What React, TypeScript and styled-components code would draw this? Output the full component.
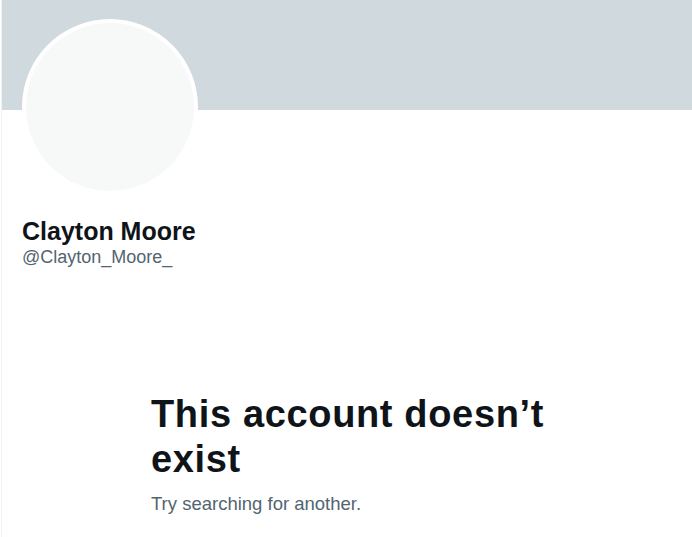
import React from 'react';
import styled, { createGlobalStyle } from 'styled-components';

const GlobalStyle = createGlobalStyle`
  body {
    margin: 0;
    background: #ffffff;
    font-family: "Liberation Sans", Arial, sans-serif;
  }
`;

const Page = styled.div`
  margin-left: 1px;
  border-left: 1px solid #eff3f4;
  min-height: 537px;
  background: #ffffff;
`;

const Banner = styled.div`
  height: 110px;
  background: #cfd9de;
`;

const ProfileHeader = styled.div`
  display: flex;
  flex-direction: column;
  align-items: flex-start;
  padding: 0 20px;
`;

const Avatar = styled.div`
  box-sizing: border-box;
  width: 176px;
  height: 176px;
  margin-top: -91px;
  border-radius: 50%;
  border: 4px solid #ffffff;
  background: #f7f9f9;
`;

const NameBlock = styled.div`
  display: flex;
  flex-direction: column;
  margin-top: 21px;
`;

const Name = styled.span`
  font-size: 25px;
  line-height: 30px;
  font-weight: 700;
  color: #0f1419;
`;

const Handle = styled.span`
  font-size: 18px;
  line-height: 23px;
  color: #536471;
`;

const EmptyState = styled.div`
  display: flex;
  flex-direction: column;
  margin-top: 123px;
  padding: 0 40px 0 149px;
`;

const Title = styled.h1`
  margin: 0 0 9px;
  max-width: 410px;
  font-size: 38px;
  line-height: 45px;
  font-weight: 800;
  letter-spacing: 0.65px;
  color: #0f1419;
`;

const Subtitle = styled.p`
  margin: 0;
  font-size: 18.5px;
  line-height: 25px;
  color: #536471;
`;

export default function App() {
  return (
    <>
      <GlobalStyle />
      <Page>
        <Banner />
        <ProfileHeader>
          <Avatar />
          <NameBlock>
            <Name>Clayton Moore</Name>
            <Handle>@Clayton_Moore_</Handle>
          </NameBlock>
        </ProfileHeader>
        <EmptyState>
          <Title>This account doesn’t exist</Title>
          <Subtitle>Try searching for another.</Subtitle>
        </EmptyState>
      </Page>
    </>
  );
}
